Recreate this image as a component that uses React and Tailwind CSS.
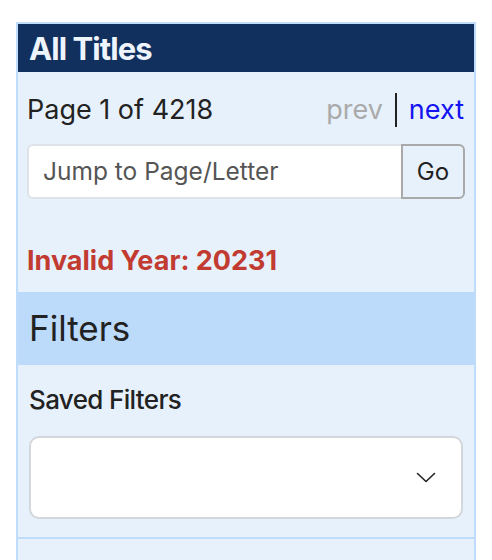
const App = () => {
  return (
    <div className="min-h-[560px] bg-white pt-[22px] pl-[16px] font-['Inter','Liberation_Sans',sans-serif]">
      <div className="w-[460px] h-[540px] border-x-2 border-t-2 border-[#bfdcfb] bg-[#e7f1fc] flex flex-col">
        {/* Title bar */}
        <div className="h-[48px] bg-[#12305e] flex items-center px-[11px]">
          <h1 className="text-[31px] font-bold tracking-[-0.03em] text-[#eef4fc] leading-none">
            All Titles
          </h1>
        </div>

        {/* Paging */}
        <div className="px-[9px]">
          <div className="h-[34px] mt-[21px] flex items-center justify-between">
            <span className="text-[27px] text-[#222]">Page 1 of 4218</span>
            <div className="flex items-center text-[27px] pr-[1px]">
              <span className="text-[#aaaaaa]">prev</span>
              <span className="ml-[12px] mr-[12px] w-[2px] h-[34px] bg-[#222]"></span>
              <a href="#" className="text-[#1414f0]">next</a>
            </div>
          </div>

          <div className="mt-[17px] flex h-[55px]">
            <input
              type="text"
              placeholder="Jump to Page/Letter"
              className="flex-1 min-w-0 bg-white border-2 border-r-0 border-[#dfe3e8] rounded-l-[6px] px-[14px] text-[24.5px] text-[#222] placeholder:text-[#555] outline-none"
            />
            <button className="w-[64px] border-2 border-[#a9a9a9] rounded-r-[6px] bg-[#e7f1fc] text-[24px] text-[#222]">
              Go
            </button>
          </div>

          <div className="h-[93px] flex items-center pt-[32px]">
            <span className="text-[27px] font-bold text-[#c23b31]">Invalid Year: 20231</span>
          </div>
        </div>

        {/* Filters */}
        <div className="h-[73px] bg-[#bcdafa] flex items-center px-[11px]">
          <h2 className="text-[35px] text-[#222]">Filters</h2>
        </div>

        <div className="px-[11px] pb-[18px] border-b-2 border-[#bfdcfb]">
          <div className="h-[32px] mt-[18px] flex items-center">
            <span className="text-[26px] font-medium tracking-[-0.025em] text-[#222]">Saved Filters</span>
          </div>
          <div className="mt-[21px] h-[83px] bg-white border-2 border-[#d3d6da] rounded-[10px] flex items-center justify-end pr-[25px]">
            <svg width="20" height="11" viewBox="0 0 20 11" fill="none" stroke="#222" strokeWidth="1.6" strokeLinecap="round" strokeLinejoin="round">
              <path d="M1.5 1.5 L10 9.5 L18.5 1.5" />
            </svg>
          </div>
        </div>
        <div className="flex-1"></div>
      </div>
    </div>
  );
};

export default App;
